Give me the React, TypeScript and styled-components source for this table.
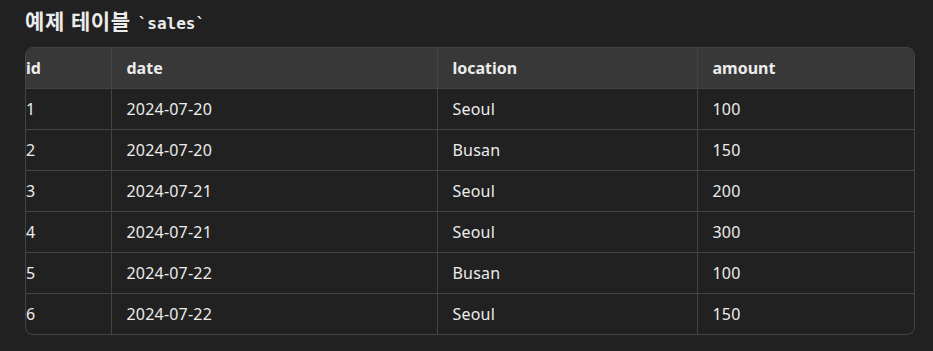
import React from 'react';
import styled, { createGlobalStyle } from 'styled-components';

const GlobalStyle = createGlobalStyle`
  html, body {
    margin: 0;
    padding: 0;
    background: #212121;
  }
  body {
    font-family: "Noto Sans", "Noto Sans CJK KR", sans-serif;
    color: #ececec;
  }
`;

const Page = styled.div`
  padding: 7px 19px 0 25px;
`;

const Title = styled.h3`
  display: flex;
  align-items: baseline;
  height: 28px;
  margin: 0 0 12px 0;
  font-size: 21px;
  font-weight: 700;
  line-height: 28px;
  letter-spacing: 0.6px;
  font-family: "Noto Sans", "Noto Sans CJK KR", sans-serif;
  white-space: pre;
`;

const Code = styled.code`
  font-family: "DejaVu Sans Mono", monospace;
  font-size: 16px;
  font-weight: 700;
  letter-spacing: 0;
  margin-left: 7px;
`;

const TableWrap = styled.div`
  border: 1px solid #444444;
  border-radius: 8px;
  overflow: hidden;
  width: 888px;
`;

const Table = styled.table`
  width: 100%;
  border-collapse: collapse;
  table-layout: fixed;
  font-size: 16px;
`;

const HeadRow = styled.tr`
  background: #383838;
`;

const Th = styled.th<{ $w: number; $first?: boolean }>`
  width: ${(p) => p.$w}px;
  height: 40px;
  padding: 0 0 0 ${(p) => (p.$first ? 0 : 15)}px;
  text-align: left;
  font-weight: 700;
  border-left: ${(p) => (p.$first ? 'none' : '1px solid #444444')};
  border-bottom: 1px solid #444444;
  box-sizing: border-box;
`;

const Td = styled.td<{ $first?: boolean }>`
  height: 40px;
  padding: 0 0 0 ${(p) => (p.$first ? 0 : 15)}px;
  border-left: ${(p) => (p.$first ? 'none' : '1px solid #444444')};
  border-top: 1px solid #444444;
  font-weight: 400;
  letter-spacing: 0.2px;
`;

const columns = [
  { key: 'id', w: 85 },
  { key: 'date', w: 326 },
  { key: 'location', w: 260 },
  { key: 'amount', w: 217 },
];

const rows = [
  ['1', '2024-07-20', 'Seoul', '100'],
  ['2', '2024-07-20', 'Busan', '150'],
  ['3', '2024-07-21', 'Seoul', '200'],
  ['4', '2024-07-21', 'Seoul', '300'],
  ['5', '2024-07-22', 'Busan', '100'],
  ['6', '2024-07-22', 'Seoul', '150'],
];

const App: React.FC = () => {
  return (
    <Page>
      <GlobalStyle />
      <Title>
        <span>예제 테이블</span>
        <Code>`sales`</Code>
      </Title>
      <TableWrap>
        <Table>
          <thead>
            <HeadRow>
              {columns.map((c, i) => (
                <Th key={c.key} $w={c.w} $first={i === 0}>
                  {c.key}
                </Th>
              ))}
            </HeadRow>
          </thead>
          <tbody>
            {rows.map((r, ri) => (
              <tr key={ri}>
                {r.map((v, i) => (
                  <Td key={i} $first={i === 0}>
                    {v}
                  </Td>
                ))}
              </tr>
            ))}
          </tbody>
        </Table>
      </TableWrap>
    </Page>
  );
};

export default App;
